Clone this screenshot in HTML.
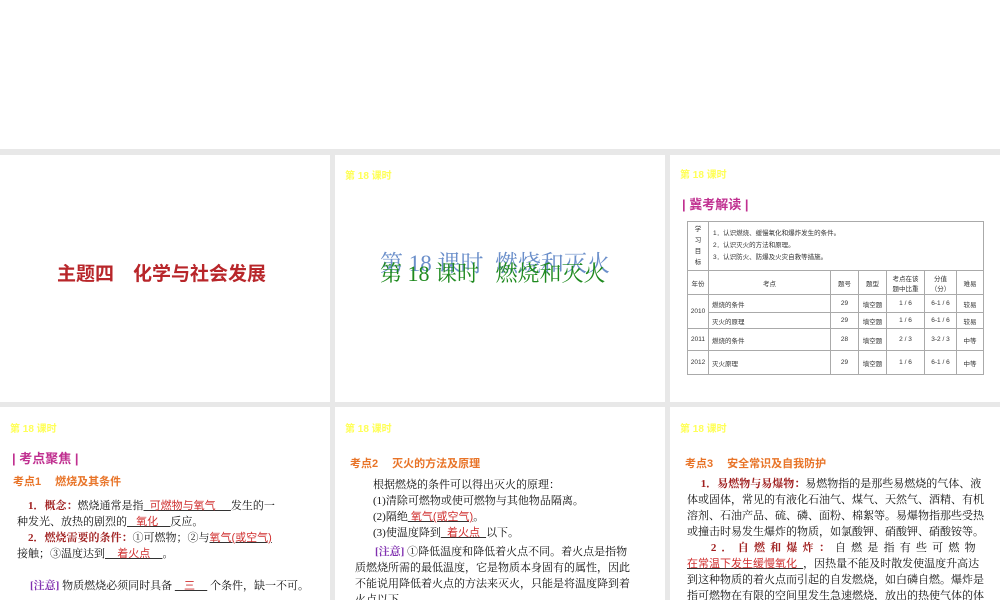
<!DOCTYPE html>
<html><head><meta charset="utf-8"><style>
*{margin:0;padding:0;box-sizing:border-box}
body{width:1000px;height:600px;background:#e8e8e8;position:relative;overflow:hidden;font-family:"Liberation Sans","Noto Sans CJK SC",sans-serif}
.p{position:absolute;background:#fff;overflow:hidden}
.a{position:absolute;white-space:nowrap}
.hd{position:absolute;left:10px;top:11px;font-size:10px;font-weight:bold;color:#ffff55}
.mag{color:#c03090;font-weight:bold;font-size:13px}
.or{color:#e87428;font-weight:bold;font-size:11px}
.t{font-size:11px;color:#111;line-height:16px;font-family:"Liberation Serif","Noto Serif CJK SC",serif}
.r{color:#d03030}
.u{text-decoration:underline;text-decoration-color:#333;color:#d03030;font-family:"Liberation Sans","Noto Sans CJK SC",sans-serif}
.dr{color:#a02020;font-weight:bold}
table{border-collapse:collapse;position:absolute;left:17px;top:66px;width:297px;font-size:6.5px;color:#333}
td{border:1px solid #aaa;text-align:center;padding:0}
</style></head><body>
<div class="p" style="left:0;top:0;width:1000px;height:149px"></div>

<div class="p" style="left:0;top:155px;width:330px;height:247px">
<div class="a" style="left:57px;top:104px;font-size:19px;font-weight:bold;color:#b8262a">主题四　化学与社会发展</div>
</div>

<div class="p" style="left:335px;top:155px;width:330px;height:247px">
<div class="hd" style="top:12px">第 18 课时</div>
<div class="a" style="left:45px;top:90px;font-size:23px;color:#6b8fca;font-family:'Liberation Serif','Noto Serif CJK SC',serif">第 18 课时&nbsp; 燃烧和灭火</div>
<div class="a" style="left:45px;top:102px;font-size:22px;color:#1f8a1f;font-family:'Liberation Serif','Noto Serif CJK SC',serif">第 18 课时&nbsp;&nbsp; 燃烧和灭火</div>
</div>

<div class="p" style="left:670px;top:155px;width:330px;height:247px">
<div class="hd" style="top:11px">第 18 课时</div>
<div class="a mag" style="left:12px;top:39px">| 冀考解读 |</div>
<table>
<tr style="height:49px"><td style="width:21px;line-height:11px">学<br>习<br>目<br>标</td><td colspan="6" style="text-align:left;padding-left:4px;line-height:12px">1．认识燃烧、缓慢氧化和爆炸发生的条件。<br>2．认识灭火的方法和原理。<br>3．认识防火、防爆及火灾自救等措施。</td></tr>
<tr style="height:24px"><td>年份</td><td style="width:122px">考点</td><td style="width:28px">题号</td><td style="width:28px">题型</td><td style="width:38px">考点在该<br>题中比重</td><td style="width:32px">分值<br>（分）</td><td>难易</td></tr>
<tr style="height:18px"><td rowspan="2">2010</td><td style="text-align:left;padding-left:3px">燃烧的条件</td><td>29</td><td>填空题</td><td>1 / 6</td><td>6-1 / 6</td><td>较易</td></tr>
<tr style="height:16px"><td style="text-align:left;padding-left:3px">灭火的原理</td><td>29</td><td>填空题</td><td>1 / 6</td><td>6-1 / 6</td><td>较易</td></tr>
<tr style="height:22px"><td>2011</td><td style="text-align:left;padding-left:3px">燃烧的条件</td><td>28</td><td>填空题</td><td>2 / 3</td><td>3-2 / 3</td><td>中等</td></tr>
<tr style="height:24px"><td>2012</td><td style="text-align:left;padding-left:3px">灭火原理</td><td>29</td><td>填空题</td><td>1 / 6</td><td>6-1 / 6</td><td>中等</td></tr>
</table>
</div>

<div class="p" style="left:0;top:407px;width:330px;height:193px">
<div class="hd" style="top:13px">第 18 课时</div>
<div class="a mag" style="left:12px;top:41px">| 考点聚焦 |</div>
<div class="a or" style="left:13px;top:66px">考点1　 燃烧及其条件</div>
<div class="a t" style="left:17px;top:91px">&nbsp;&nbsp;&nbsp;&nbsp;<span class="dr">1．概念：</span>燃烧通常是指<span class="u">&nbsp;&nbsp;可燃物与氧气&nbsp;&nbsp;&nbsp;&nbsp;&nbsp;</span>发生的一</div>
<div class="a t" style="left:17px;top:107px">种发光、放热的剧烈的<span class="u">&nbsp;&nbsp;&nbsp;氧化&nbsp;&nbsp;&nbsp;&nbsp;</span>反应。</div>
<div class="a t" style="left:17px;top:123px">&nbsp;&nbsp;&nbsp;&nbsp;<span class="dr">2．燃烧需要的条件：</span>①可燃物；②与<span class="u">氧气(或空气)</span></div>
<div class="a t" style="left:17px;top:139px">接触；③温度达到<span class="u">&nbsp;&nbsp;&nbsp;&nbsp;着火点&nbsp;&nbsp;&nbsp;&nbsp;</span>。</div>
<div class="a t" style="left:30px;top:171px"><span style="color:#8030b0;font-weight:bold">[注意]</span> 物质燃烧必须同时具备 <span class="u">&nbsp;&nbsp;&nbsp;三&nbsp;&nbsp;&nbsp;&nbsp;</span> 个条件，缺一不可。</div>
</div>

<div class="p" style="left:335px;top:407px;width:330px;height:193px">
<div class="hd" style="top:13px">第 18 课时</div>
<div class="a or" style="left:15px;top:48px">考点2　 灭火的方法及原理</div>
<div class="a t" style="left:38px;top:70px">根据燃烧的条件可以得出灭火的原理：</div>
<div class="a t" style="left:38px;top:86px">(1)清除可燃物或使可燃物与其他物品隔离。</div>
<div class="a t" style="left:38px;top:102px">(2)隔绝<span class="u">&nbsp;氧气(或空气)</span>。</div>
<div class="a t" style="left:38px;top:118px">(3)使温度降到<span class="u">&nbsp;&nbsp;着火点&nbsp;&nbsp;</span>以下。</div>
<div class="a t" style="left:40px;top:137px"><span style="color:#8030b0;font-weight:bold">[注意]</span> ①降低温度和降低着火点不同。着火点是指物</div>
<div class="a t" style="left:20px;top:153px">质燃烧所需的最低温度，它是物质本身固有的属性，因此</div>
<div class="a t" style="left:20px;top:169px">不能说用降低着火点的方法来灭火，只能是将温度降到着</div>
<div class="a t" style="left:20px;top:185px">火点以下。</div>
</div>

<div class="p" style="left:670px;top:407px;width:330px;height:193px">
<div class="hd" style="top:13px">第 18 课时</div>
<div class="a or" style="left:15px;top:48px">考点3　 安全常识及自我防护</div>
<div class="a t" style="left:17px;top:69px">&nbsp;&nbsp;&nbsp;&nbsp;&nbsp;<span class="dr">1．易燃物与易爆物：</span>易燃物指的是那些易燃烧的气体、液</div>
<div class="a t" style="left:17px;top:85px">体或固体，常见的有液化石油气、煤气、天然气、酒精、有机</div>
<div class="a t" style="left:17px;top:101px">溶剂、石油产品、硫、磷、面粉、棉絮等。易爆物指那些受热</div>
<div class="a t" style="left:17px;top:117px">或撞击时易发生爆炸的物质，如氯酸钾、硝酸钾、硝酸铵等。</div>
<div class="a t" style="left:17px;top:133px;letter-spacing:5.2px">&nbsp;&nbsp;&nbsp;<span class="dr">2．自燃和爆炸：</span>自燃是指有些可燃物</div>
<div class="a t" style="left:17px;top:149px"><span class="u">在常温下发生缓慢氧化&nbsp;&nbsp;</span>，因热量不能及时散发使温度升高达</div>
<div class="a t" style="left:17px;top:165px">到这种物质的着火点而引起的自发燃烧，如白磷自燃。爆炸是</div>
<div class="a t" style="left:17px;top:181px">指可燃物在有限的空间里发生急速燃烧，放出的热使气体的体</div>
</div>
</body></html>
